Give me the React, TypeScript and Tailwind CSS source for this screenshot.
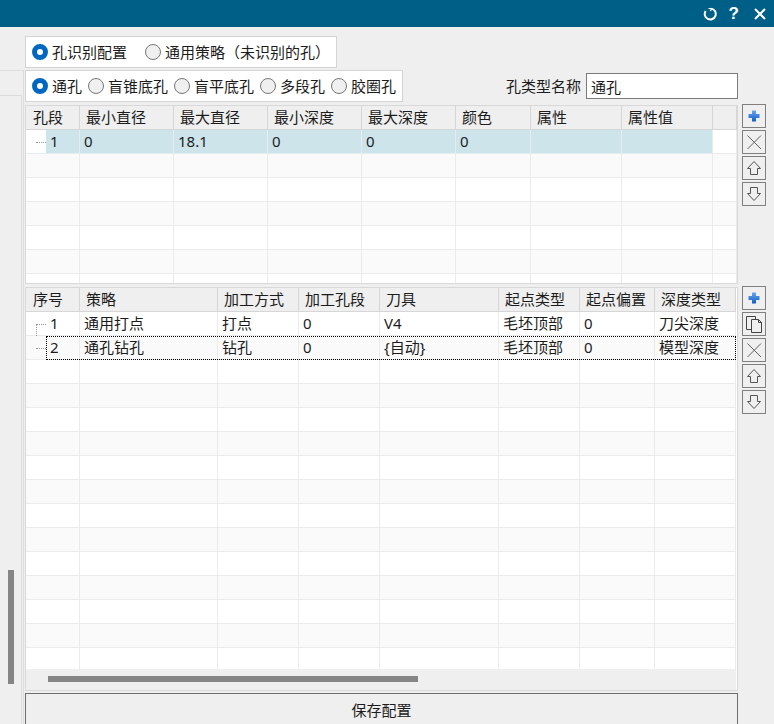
const HOLE_COLS = 'grid-cols-[54px_94px_94px_94px_94px_75px_91px_91px_24px]';
const STRATEGY_COLS = 'grid-cols-[54px_138px_81px_81px_119px_81px_75px_81px]';

const HOLE_HEAD = ['孔段', '最小直径', '最大直径', '最小深度', '最大深度', '颜色', '属性', '属性值', ''];
const HOLE_ROW = ['0', '18.1', '0', '0', '0', '', ''];

const STRATEGY_HEAD = ['序号', '策略', '加工方式', '加工孔段', '刀具', '起点类型', '起点偏置', '深度类型'];
const STRATEGY_ROWS = [
  ['通用打点', '打点', '0', 'V4', '毛坯顶部', '0', '刀尖深度'],
  ['通孔钻孔', '钻孔', '0', '{自动}', '毛坯顶部', '0', '模型深度'],
];

function Radio({ label, checked }: { label: string; checked?: boolean }) {
  return (
    <span className="flex items-center gap-1">
      <span
        className={
          checked
            ? 'size-4 rounded-full border-[5px] border-[#0067c0] bg-white'
            : 'size-4 rounded-full border border-[#777777] bg-[#f0f0f0]'
        }
      />
      <span className="whitespace-nowrap">{label}</span>
    </span>
  );
}

function HeadCell({ label, first }: { label: string; first?: boolean }) {
  return (
    <div
      className={`flex h-6 items-center border-r border-b border-[#d6d6d6] bg-[#efefef] ${first ? 'pl-[7px]' : 'pl-[6px]'}`}
    >
      {label}
    </div>
  );
}

function Cell({ children, bg }: { children?: React.ReactNode; bg: string }) {
  return (
    <div className={`flex h-6 items-center border-r border-b border-[#ebebeb] pl-1 ${bg}`}>
      {children}
    </div>
  );
}

function EmptyRows({ count, cols, start }: { count: number; cols: number; start: number }) {
  return (
    <>
      {Array.from({ length: count * cols }, (_, i) => {
        const row = Math.floor(i / cols) + start;
        return <Cell key={i} bg={row % 2 === 1 ? 'bg-[#fafafa]' : 'bg-white'} />;
      })}
    </>
  );
}

function HoleTable() {
  return (
    <div className="h-[179px] w-[713px] overflow-hidden border border-[#d8d8d8] bg-white">
      <div className={`grid ${HOLE_COLS}`}>
        {HOLE_HEAD.map((h, i) => (
          <HeadCell key={i} label={h} first={i === 0} />
        ))}

        {/* selected row: the tree gutter stays white */}
        <div className="relative flex h-6 border-r border-b border-[#e4eef1] bg-white pl-5">
          <span className="absolute top-3 left-[10px] w-[10px] border-t border-dotted border-[#999999]" />
          <span className="flex flex-1 items-center bg-[#cce4ea] pl-1">1</span>
        </div>
        {HOLE_ROW.map((v, i) => (
          <div
            key={i}
            className="flex h-6 items-center border-r border-b border-[#e4eef1] bg-[#cce4ea] pl-1"
          >
            {v}
          </div>
        ))}
        <Cell bg="bg-white" />

        <EmptyRows count={6} cols={9} start={1} />
      </div>
    </div>
  );
}

function StrategyTable() {
  return (
    <div className="flex h-[404px] w-[713px] flex-col border border-[#d8d8d8] bg-white">
      <div className="flex-1 overflow-hidden">
        <div className={`grid w-[710px] ${STRATEGY_COLS}`}>
          {STRATEGY_HEAD.map((h, i) => (
            <HeadCell key={i} label={h} first={i === 0} />
          ))}

          {STRATEGY_ROWS.map((row, r) => (
            <div key={r} className={`relative col-span-8 grid ${STRATEGY_COLS}`}>
              <Cell bg={r === 1 ? 'bg-[#fafafa]' : 'bg-white'}>
                <span className="pl-5">{r + 1}</span>
              </Cell>
              {row.map((v, i) => (
                <Cell key={i} bg={r === 1 ? 'bg-[#fafafa]' : 'bg-white'}>
                  {v}
                </Cell>
              ))}
              {r === 0 ? (
                <span className="absolute top-3 left-[10px] h-6 w-[10px] border-t border-l border-dotted border-[#999999]" />
              ) : (
                <>
                  <span className="absolute top-3 left-[10px] w-[10px] border-t border-dotted border-[#999999]" />
                  {/* focus rectangle on the current row */}
                  <span className="absolute inset-y-0 right-0 left-5 border border-dotted border-black" />
                </>
              )}
            </div>
          ))}

          <EmptyRows count={13} cols={8} start={2} />
        </div>
      </div>
      <div className="h-[21px] w-[710px] shrink-0 bg-[#efefef] pt-[7px] pl-[22px]">
        <div className="h-[6px] w-[370px] bg-[#858585]" />
      </div>
    </div>
  );
}

function ToolButton({ children }: { children: React.ReactNode }) {
  return (
    <button className="size-6 border border-[#7f7f7f] bg-[#efefef]">
      <svg viewBox="0 0 22 22" className="size-[22px]" fill="none">
        {children}
      </svg>
    </button>
  );
}

function PlusIcon() {
  return (
    <>
      <defs>
        <linearGradient id="plus-fill" x1="0" y1="0" x2="0" y2="1">
          <stop offset="0" stopColor="#6aa5ee" />
          <stop offset="1" stopColor="#0f5fc6" />
        </linearGradient>
      </defs>
      <path d="M9 5.5h4V9h3.5v4H13v3.5H9V13H5.5V9H9z" fill="url(#plus-fill)" />
    </>
  );
}

function CrossIcon() {
  return <path d="M4.5 4.5 18 18M18 4.5 4.5 18" stroke="#606060" />;
}

function UpIcon() {
  return <path d="M11 4.5 17.5 11.5H14.5V17.5H7.5V11.5H4.5Z" stroke="#555555" />;
}

function DownIcon() {
  return <path d="M7.5 4.5H14.5V10.5H17.5L11 17.5 4.5 10.5H7.5Z" stroke="#555555" />;
}

function CopyIcon() {
  return (
    <>
      <path d="M12.5 6.5V3.5H3.5V16.5H8.5" stroke="#444444" />
      <path d="M8.5 6.5H15.5L18.5 9.5V19.5H8.5ZM15.5 6.5V9.5H18.5" stroke="#444444" />
    </>
  );
}

export default function App() {
  return (
    <div className="flex h-[724px] w-[774px] flex-col overflow-hidden bg-[#efefef] font-['Noto_Sans','Noto_Sans_CJK_SC',sans-serif] text-[15px] text-[#1c1c1c]">
      {/* title bar */}
      <div className="flex h-[27px] shrink-0 items-center justify-end bg-[#005f87] pr-2 text-white">
        <svg viewBox="0 0 14 14" className="mr-3 size-[14px]" fill="none" stroke="currentColor" strokeWidth="2">
          <path d="M8.5 1.6A5.5 5.5 0 1 1 2.6 4" />
          <path d="M5.5 1.5 8.5 1.6 7.5 4" strokeWidth="1.2" />
        </svg>
        <span className="mr-[15px] font-['Liberation_Sans',sans-serif] text-[17px] leading-none font-bold">?</span>
        <svg viewBox="0 0 12 12" className="size-3" fill="none" stroke="currentColor" strokeWidth="2">
          <path d="M1 1 11 11M11 1 1 11" />
        </svg>
      </div>

      <div className="flex flex-1">
        {/* collapsed side panel */}
        <div className="mt-[43px] h-[660px] w-6 shrink-0 border-t border-r border-[#dcdcdc]">
          <div className="h-6" />
          <div className="h-full w-[22px] border-t border-r border-[#dcdcdc] pt-[474px] pl-2">
            <div className="h-[114px] w-[6px] bg-[#858585]" />
          </div>
        </div>

        <div className="ml-px flex flex-col pt-[9px]">
          <div className="flex h-8 w-[312px] items-center gap-[18px] border border-[#d4d4d4] bg-white pl-[6px]">
            <Radio label="孔识别配置" checked />
            <Radio label="通用策略（未识别的孔）" />
          </div>

          <div className="mt-[2px] flex w-[713px] items-center justify-between">
            <div className="flex h-8 w-[378px] items-center gap-[6px] border border-[#d4d4d4] bg-white pl-[6px]">
              <Radio label="通孔" checked />
              <Radio label="盲锥底孔" />
              <Radio label="盲平底孔" />
              <Radio label="多段孔" />
              <Radio label="胶圈孔" />
            </div>
            <label className="flex items-center gap-[5px]">
              孔类型名称
              <input
                readOnly
                value="通孔"
                className="h-[26px] w-[152px] border border-[#7a7a7a] bg-white pl-1 outline-none"
              />
            </label>
          </div>

          <div className="mt-[3px] flex items-start gap-1">
            <HoleTable />
            <div className="-mt-px flex flex-col gap-[2px]">
              <ToolButton><PlusIcon /></ToolButton>
              <ToolButton><CrossIcon /></ToolButton>
              <ToolButton><UpIcon /></ToolButton>
              <ToolButton><DownIcon /></ToolButton>
            </div>
          </div>

          <div className="mt-[3px] flex items-start gap-1">
            <StrategyTable />
            <div className="-mt-px flex flex-col gap-[2px]">
              <ToolButton><PlusIcon /></ToolButton>
              <ToolButton><CopyIcon /></ToolButton>
              <ToolButton><CrossIcon /></ToolButton>
              <ToolButton><UpIcon /></ToolButton>
              <ToolButton><DownIcon /></ToolButton>
            </div>
          </div>

          <button className="mt-[2px] h-[34px] w-[713px] shrink-0 border border-[#6e6e6e] bg-[#efefef]">
            保存配置
          </button>
        </div>
      </div>
    </div>
  );
}
